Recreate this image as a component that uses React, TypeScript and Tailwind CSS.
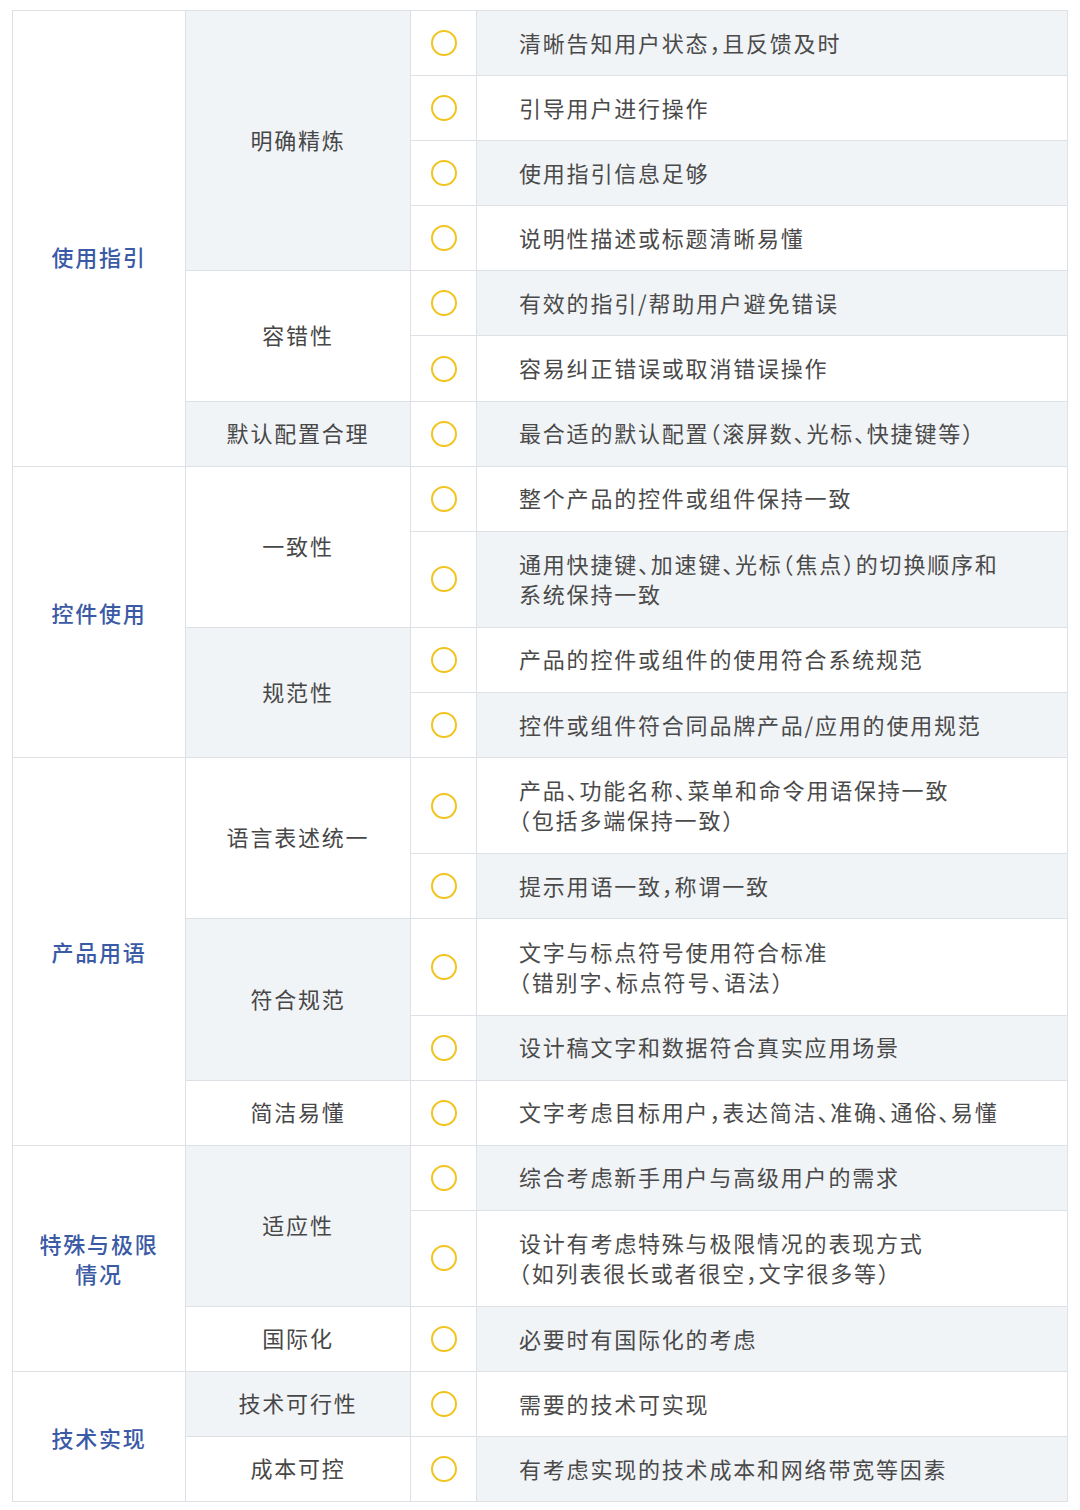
import React from 'react'

type Sub = { name: string; items: string[][] }
type Group = { cat: string[]; subs: Sub[]; offset?: boolean }

const groups: Group[] = [
  {
    cat: ['使用指引'],
    offset: true,
    subs: [
      {
        name: '明确精炼',
        items: [['清晰告知用户状态，且反馈及时'], ['引导用户进行操作'], ['使用指引信息足够'], ['说明性描述或标题清晰易懂']],
      },
      { name: '容错性', items: [['有效的指引/帮助用户避免错误'], ['容易纠正错误或取消错误操作']] },
      { name: '默认配置合理', items: [['最合适的默认配置（滚屏数、光标、快捷键等）']] },
    ],
  },
  {
    cat: ['控件使用'],
    subs: [
      {
        name: '一致性',
        items: [['整个产品的控件或组件保持一致'], ['通用快捷键、加速键、光标（焦点）的切换顺序和', '系统保持一致']],
      },
      { name: '规范性', items: [['产品的控件或组件的使用符合系统规范'], ['控件或组件符合同品牌产品/应用的使用规范']] },
    ],
  },
  {
    cat: ['产品用语'],
    subs: [
      {
        name: '语言表述统一',
        items: [['产品、功能名称、菜单和命令用语保持一致', '（包括多端保持一致）'], ['提示用语一致，称谓一致']],
      },
      {
        name: '符合规范',
        items: [['文字与标点符号使用符合标准', '（错别字、标点符号、语法）'], ['设计稿文字和数据符合真实应用场景']],
      },
      { name: '简洁易懂', items: [['文字考虑目标用户，表达简洁、准确、通俗、易懂']] },
    ],
  },
  {
    cat: ['特殊与极限', '情况'],
    subs: [
      {
        name: '适应性',
        items: [['综合考虑新手用户与高级用户的需求'], ['设计有考虑特殊与极限情况的表现方式', '（如列表很长或者很空，文字很多等）']],
      },
      { name: '国际化', items: [['必要时有国际化的考虑']] },
    ],
  },
  {
    cat: ['技术实现'],
    subs: [
      { name: '技术可行性', items: [['需要的技术可实现']] },
      { name: '成本可控', items: [['有考虑实现的技术成本和网络带宽等因素']] },
    ],
  },
]

const cell = 'border border-[#dde0e4] p-0'

export default function App() {
  let row = 0
  let subIndex = 0
  const rows: React.ReactNode[] = []

  groups.forEach((g, gi) => {
    const groupSpan = g.subs.reduce((n, s) => n + s.items.length, 0)
    g.subs.forEach((s, si) => {
      const subShaded = subIndex % 2 === 0
      subIndex++
      s.items.forEach((lines, ii) => {
        const shaded = row % 2 === 0
        const tall = lines.length > 1
        row++
        rows.push(
          <tr key={`${gi}-${si}-${ii}`} className={tall ? 'h-[96.2px]' : 'h-[65.1px]'}>
            {si === 0 && ii === 0 && (
              <td
                rowSpan={groupSpan}
                className={`${cell} bg-white text-center align-middle font-medium text-[#3b5aa6] leading-[30px] ${g.offset ? 'pt-[36px]' : ''}`}
              >
                {g.cat.map((c) => (
                  <div key={c}>{c}</div>
                ))}
              </td>
            )}
            {ii === 0 && (
              <td
                rowSpan={s.items.length}
                className={`${cell} pb-[3px] text-center align-middle text-[#474747] ${subShaded ? 'bg-[#f1f4f7]' : 'bg-white'}`}
              >
                {s.name}
              </td>
            )}
            <td className={`${cell} bg-white align-middle`}>
              <div className="mx-auto h-[26px] w-[26px] rounded-full border-2 border-[#f2c420]" />
            </td>
            <td
              className={`${cell} pl-[42px] pb-[3px] align-middle text-[#4a4a4a] leading-[30px] whitespace-nowrap ${shaded ? 'bg-[#f1f4f7]' : 'bg-white'}`}
            >
              {lines.map((l) => (
                <div key={l}>{l}</div>
              ))}
            </td>
          </tr>
        )
      })
    })
  })

  return (
    <div className="min-h-[1510px] w-[1080px] bg-white pl-[12px] pt-[10px]">
      <table
        className="w-[1055px] table-fixed border-collapse border border-[#dcdfe3] text-[22px] tracking-[1.8px] [font-family:'Noto_Sans_CJK_SC',sans-serif] [font-feature-settings:'halt']"
      >
        <colgroup>
          <col className="w-[173px]" />
          <col className="w-[225px]" />
          <col className="w-[66px]" />
          <col className="w-[591px]" />
        </colgroup>
        <tbody>{rows}</tbody>
      </table>
    </div>
  )
}
